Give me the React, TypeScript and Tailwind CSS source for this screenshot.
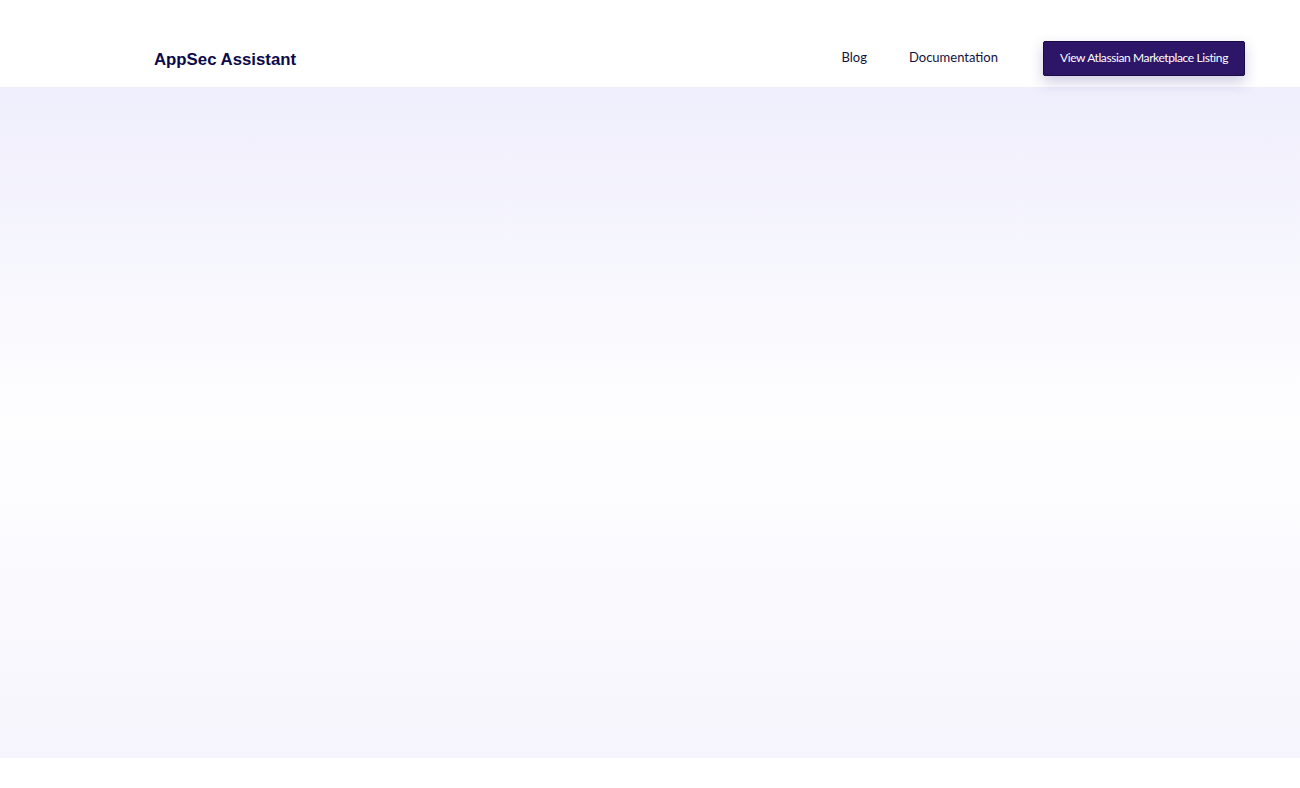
import React from "react";

export default function App() {
  return (
    <div className="min-h-[788px] bg-white">
      <header className="h-[87px] bg-white flex items-start pt-[41px] pl-[154px] pr-[55px]">
        <div className="flex w-full items-center h-[34px]">
          <div
            className="text-[16.8px] font-bold text-[#0c0a4a] mt-[3px]"
            style={{ fontFamily: '"Liberation Sans", Arial, sans-serif' }}
          >
            AppSec Assistant
          </div>
          <nav
            className="ml-auto flex items-center text-[13px] text-[#14123a]"
            style={{ fontFamily: 'Lato, "Noto Sans", sans-serif' }}
          >
            <a className="-mt-[1px] mr-[42px]">Blog</a>
            <a className="-mt-[1px] mr-[45px]">Documentation</a>
            <button className="h-[35px] w-[202px] rounded-[2px] border border-[#1a0b45] bg-[#2d1568] text-white text-[12px] tracking-[-0.4px] shadow-[0_6px_14px_rgba(60,50,140,0.25)]">
              View Atlassian Marketplace Listing
            </button>
          </nav>
        </div>
      </header>
      <section className="h-[671px] bg-linear-to-b from-[#efeefc] via-[#fefeff] to-[#f6f5fd]" />
    </div>
  );
}
